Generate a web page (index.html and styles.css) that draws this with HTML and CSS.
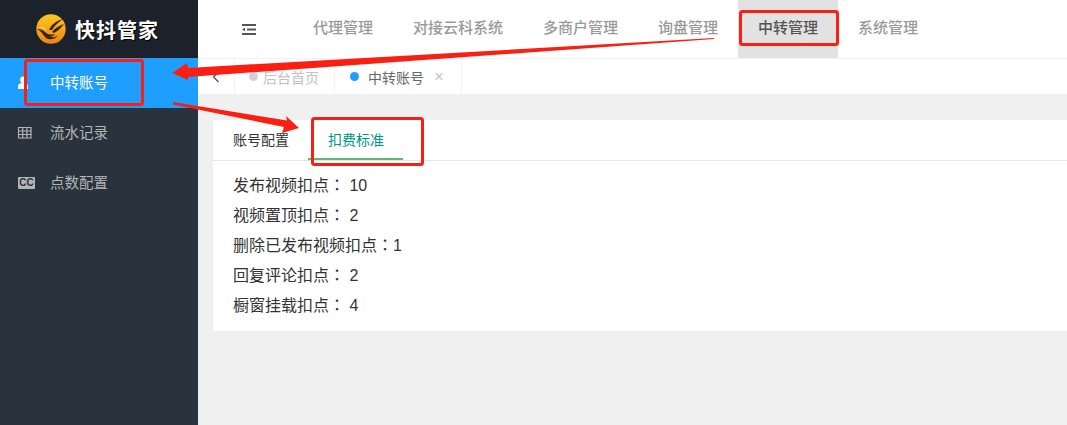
FILE: index.html
```html
<!DOCTYPE html>
<html lang="zh-CN">

<head>
    <meta charset="UTF-8">
    <meta name="viewport" content="width=device-width, initial-scale=1.0">
    <title>中转账号</title>
    <link rel="stylesheet" href="styles.css">
</head>

<body>

    <div class="sidebar">
        <div class="logo">
            <svg class="logo-mark" width="30" height="30" viewBox="0 0 30 30">
                <defs>
                    <linearGradient id="gold" x1="0" y1="0" x2="0" y2="1">
                        <stop offset="0" stop-color="#fbc81f" />
                        <stop offset="1" stop-color="#ee8410" />
                    </linearGradient>
                </defs>
                <circle cx="15" cy="15" r="14.700" fill="url(#gold)" />
                <path d="M13 16c2-5 7-9 14-11-4 3-8 6-11 11z" fill="#3a2410" />
                <path d="M16 18c3-4 7-6 12-8-3 4-6 7-10 9z" fill="#3a2410" />
                <path d="M1 15c4 0 6 1 8 3 3 3 7 3 10 2 -1 2-3 2.500-5 2.500 2 1 5 1 8-1-2 3-6 4.500-10 3.500-4-1-4-6-11-10z" fill="#3a2410" />
                <path d="M3 13c3-.5 6 .5 8 3-3-1.500-5-2-8-3z" fill="#fff3c0" />
            </svg>
            <span class="logo-text">快抖管家</span>
        </div>
        <ul class="side-menu">
            <li class="side-item active">
                <svg class="side-icon" width="16" height="14" viewBox="0 0 16 14">
                    <ellipse cx="5" cy="3.800" rx="2.800" ry="3.300" fill="currentColor" />
                    <path d="M0 13V10.500C0 8 1.800 7 5 7s5 1 5 3.500V13z" fill="currentColor" />
                </svg>
                <span class="side-label">中转账号</span>
            </li>
            <li class="side-item">
                <svg class="side-icon" width="16" height="12" viewBox="0 0 16 12">
                    <path d="M.5.500h12.500v10.500H.5zM.5 4h12.500M.5 7.500h12.500M4.700.500v10.500M8.900.500v10.500" fill="none" stroke="currentColor" stroke-width="1.200" />
                </svg>
                <span class="side-label">流水记录</span>
            </li>
            <li class="side-item">
                <span class="cc-icon">CC</span>
                <span class="side-label">点数配置</span>
            </li>
        </ul>
    </div>

    <div class="main">
        <div class="header">
            <svg class="fold-icon" width="14" height="11" viewBox="0 0 14 11">
                <path d="M0 0h14v2H0zM5 4.500h9v2H5zM0 9h14v2H0zM0 5.500L3 3.800v3.400z" fill="#555" />
            </svg>
            <ul class="top-nav">
                <li class="top-item">代理管理</li>
                <li class="top-item">对接云科系统</li>
                <li class="top-item">多商户管理</li>
                <li class="top-item">询盘管理</li>
                <li class="top-item current">中转管理</li>
                <li class="top-item">系统管理</li>
            </ul>
        </div>

        <div class="page-tabs">
            <div class="page-back">
                <svg width="8" height="12" viewBox="0 0 8 12">
                    <path d="M6.500 1L1.500 6l5 5" fill="none" stroke="#444" stroke-width="1.100" />
                </svg>
            </div>
            <div class="page-tab home"><i class="dot"></i>后台首页</div>
            <div class="page-tab open"><i class="dot blue"></i>中转账号<span class="close">×</span></div>
        </div>

        <div class="content">
            <div class="card">
                <div class="card-tabs">
                    <div class="card-tab">账号配置</div>
                    <div class="card-tab selected">扣费标准</div>
                </div>
                <!-- lang 让全角冒号居中显示 -->
                <div class="card-body" lang="zh-Hant">
                    <p>发布视频扣点： 10</p>
                    <p>视频置顶扣点： 2</p>
                    <p>删除已发布视频扣点：1</p>
                    <p>回复评论扣点： 2</p>
                    <p>橱窗挂载扣点： 4</p>
                </div>
            </div>
        </div>
    </div>

    <!-- 红色标注 -->
    <svg class="marks" width="1067" height="425" viewBox="0 0 1067 425">
        <g fill="none" stroke="#fb1e12" stroke-width="3">
            <rect x="740.500" y="11.500" width="97" height="33" rx="2" />
            <rect x="25.500" y="60.500" width="117" height="44" rx="2" />
            <rect x="312.500" y="118.500" width="110" height="46" rx="2" />
        </g>
        <g fill="#fb1e12">
            <path d="M714 38L188 68 187 63 172 73 188 80 188 77 714 39z" />
            <path d="M173 102L287 120.500 286 116 299 128 282 133 284 127 173 104.500z" />
        </g>
    </svg>

</body>

</html>
```

FILE: styles.css
```css
* {
    box-sizing: border-box;
}

body {
    margin: 0;
    height: 425px;
    overflow: hidden;
    display: flex;
    position: relative;
    font-family: "Liberation Sans", "Noto Sans CJK SC", sans-serif;
    background-color: #f0f0f0;
    color: #333;
}

ul {
    list-style: none;
    margin: 0;
    padding: 0;
}

.sidebar {
    width: 198px;
    flex-shrink: 0;
    background-color: #29333e;
}

.logo {
    height: 58px;
    display: flex;
    align-items: center;
    padding-left: 36px;
    gap: 9px;
    background-color: #1b222c;
}

.logo-text {
    color: #fff;
    font-size: 20px;
    font-weight: 700;
    letter-spacing: 1px;
    text-shadow: 1px 1px 0 #000;
}

.side-item {
    height: 50px;
    display: flex;
    align-items: center;
    padding-left: 18px;
    font-size: 14.500px;
    color: #b5b5b5;
}

.side-item.active {
    background-color: #1e9fff;
    color: #fff;
}

.side-icon {
    margin-right: 16px;
}

.side-label {
    margin-bottom: 3px;
}

.cc-icon {
    width: 17px;
    height: 12px;
    margin-right: 15px;
    line-height: 12px;
    text-align: center;
    font-size: 10px;
    font-weight: 700;
    border-radius: 1px;
    background-color: #b5b5b5;
    color: #29333e;
}

.main {
    flex: 1;
    min-width: 0;
}

.header {
    height: 59px;
    display: flex;
    align-items: center;
    background-color: #fff;
    border-bottom: 1px solid #f2f2f2;
}

.fold-icon {
    margin-left: 44px;
}

.top-nav {
    display: flex;
    margin-left: 37px;
}

.top-item {
    height: 58px;
    line-height: 56px;
    padding: 0 20px;
    font-size: 15px;
    font-weight: 500;
    color: #999;
}

.top-item.current {
    background-color: #e2e2e2;
    color: #555;
}

.page-tabs {
    height: 35px;
    display: flex;
    background-color: #fff;
}

.page-back {
    width: 37px;
    display: flex;
    align-items: center;
    justify-content: center;
    border-right: 1px solid #f2f2f2;
}

.page-tab {
    display: flex;
    align-items: center;
    font-size: 14px;
    border-right: 1px solid #f2f2f2;
}

.page-tab.home {
    width: 100px;
    padding-left: 14px;
    color: #c2c2c2;
}

.page-tab.open {
    width: 127px;
    padding-left: 15px;
    color: #666;
}

.dot {
    width: 9px;
    height: 9px;
    border-radius: 50%;
    background-color: #d2d2d2;
    margin-right: 5px;
}

.dot.blue {
    background-color: #1e9fff;
    margin-right: 9px;
}

.close {
    margin-left: 10px;
    font-size: 17px;
    color: #c8c8c8;
}

.content {
    padding: 26px 0 0 15px;
}

.card {
    height: 211px;
    background-color: #fff;
}

.card-tabs {
    height: 41px;
    display: flex;
    border-bottom: 1px solid #e6e6e6;
}

.card-tab {
    height: 40px;
    line-height: 40px;
    padding: 0 20px;
    font-size: 14px;
    white-space: nowrap;
}

.card-tab.selected {
    width: 95px;
    margin-left: -1px;
    color: #009688;
    border-bottom: 2px solid #5fb878;
}

.card-body {
    padding: 10px 20px;
    font-family: "Liberation Sans", "Noto Sans CJK TC", sans-serif;
}

.card-body p {
    margin: 0;
    height: 30px;
    line-height: 30px;
    font-size: 16px;
}

.marks {
    position: absolute;
    top: 0;
    left: 0;
}
```
